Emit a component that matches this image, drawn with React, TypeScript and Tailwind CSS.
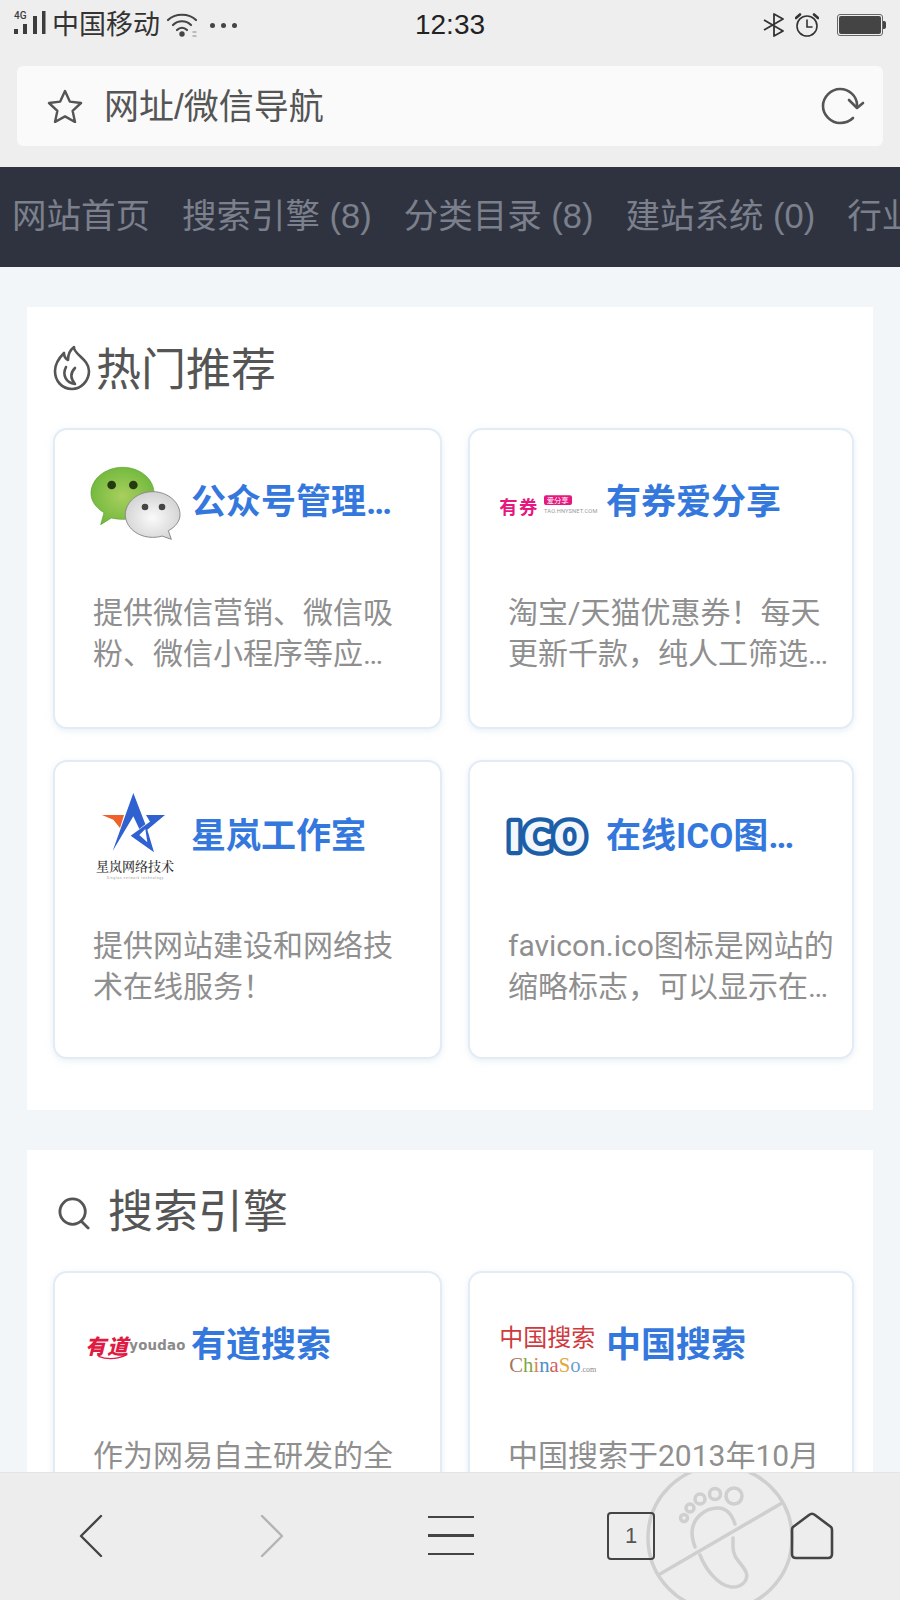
import { ReactNode } from 'react'

const cjk = "Noto Sans CJK SC"

function WechatLogo() {
  return (
    <svg viewBox="165 393 300 300" className="w-[100px] h-[100px] shrink-0">
      <defs>
        <radialGradient id="wxGreen" cx="50%" cy="50%" r="60%">
          <stop offset="0%" stopColor="#a9cf5e" />
          <stop offset="100%" stopColor="#6bb63a" />
        </radialGradient>
        <radialGradient id="wxWhite" cx="50%" cy="55%" r="60%">
          <stop offset="0%" stopColor="#fafafa" />
          <stop offset="100%" stopColor="#cfcfcf" />
        </radialGradient>
      </defs>
      <path d="M212 614 L222 578 C196 562 183 542 183 520 C183 477 226 442 278 442 C330 442 372 477 372 520 C372 563 330 598 278 598 C266 598 254 596 244 594 Z" fill="url(#wxGreen)" stroke="#5aa02c" strokeWidth="2" />
      <circle cx="245" cy="495" r="13" fill="#263a10" />
      <circle cx="310" cy="495" r="13" fill="#263a10" />
      <path d="M424 658 L415 632 C438 620 450 602 450 584 C450 547 414 515 368 515 C322 515 286 547 286 584 C286 621 322 652 368 652 C378 652 388 651 396 648 Z" fill="url(#wxWhite)" stroke="#8c8c8c" strokeWidth="3" />
      <circle cx="345" cy="561" r="10" fill="#444" />
      <circle cx="396" cy="561" r="10" fill="#444" />
    </svg>
  )
}

function YouquanLogo() {
  return (
    <svg viewBox="90 33 300 300" className="w-[100px] h-[100px] shrink-0">
      <text x="88" y="221" fontFamily={cjk} fontWeight="700" fontSize="55" fill="#e6177f" textLength="114">有券</text>
      <rect x="222" y="166" width="84" height="29" rx="6" fill="#e6177f" />
      <text x="230" y="189" fontFamily={cjk} fontSize="22" fill="#fff">爱分享</text>
      <text x="222" y="220" fontFamily="Roboto" fontSize="17" fill="#999" textLength="160">TAO.HNYSNET.COM</text>
    </svg>
  )
}

function StarLogo() {
  return (
    <svg viewBox="45 18 300 300" className="w-[100px] h-[100px] shrink-0">
      <path d="M190 42 L128 216 L190 112 L208 150 L226 136 Z" fill="#2f62d0" />
      <path d="M285 108 L228 108 L240 128 L182 170 L252 220 L232 152 Z" fill="#2f62d0" />
      <path d="M208 168 L226 150 L232 190 Z" fill="#fff" />
      <path d="M96 108 L162 108 L150 147 L130 122 Z" fill="#f0602a" />
      <text x="78" y="276" fontFamily="Noto Serif CJK SC, Noto Sans CJK SC" fontSize="39" fontWeight="500" fill="#333" textLength="234">星岚网络技术</text>
      <text x="110" y="299" fontFamily="Roboto" fontSize="10" fill="#999" textLength="170">Xinglan network technology</text>
    </svg>
  )
}

function IcoLogo() {
  return (
    <svg viewBox="30 -12 300 300" className="w-[100px] h-[100px] shrink-0">
      <text
        x="52"
        y="186"
        fontFamily="DejaVu Sans"
        fontWeight="700"
        fontSize="116"
        fill="#f3f7fb"
        stroke="#1d5ea8"
        strokeWidth="26"
        strokeLinejoin="round"
        paintOrder="stroke"
        textLength="236"
      >
        ICO
      </text>
    </svg>
  )
}

function YoudaoLogo() {
  return (
    <svg viewBox="165 375 300 300" className="w-[100px] h-[100px] shrink-0">
      <text x="166" y="556" fontFamily={cjk} fontWeight="900" fontStyle="italic" fontSize="62" fill="#e01b43" textLength="128">有道</text>
      <path d="M205 562 C232 572 264 570 292 556" fill="none" stroke="#e01b43" strokeWidth="4" />
      <text x="298" y="542" fontFamily="DejaVu Sans" fontWeight="700" fontSize="40" fill="#8a8a8a" textLength="168">youdao</text>
    </svg>
  )
}

function ChinasoLogo() {
  return (
    <svg viewBox="60 -15 300 300" className="w-[100px] h-[100px] shrink-0">
      <text x="58" y="142" fontFamily={cjk} fontSize="72" fill="#cf3a3e" textLength="288">中国搜索</text>
      <text y="218" fontFamily="Liberation Serif" fontSize="62">
        <tspan x="88" fill="#a8745a">C</tspan>
        <tspan fill="#7fa548">h</tspan>
        <tspan fill="#d9884a">i</tspan>
        <tspan fill="#4b8fc9">n</tspan>
        <tspan fill="#d25b5b">a</tspan>
        <tspan fill="#e0a93c">S</tspan>
        <tspan fill="#6f9fd0">o</tspan>
        <tspan fontSize="24" fill="#888">.com</tspan>
      </text>
    </svg>
  )
}

function SiteCard({ logo, title, desc, offset = false }: { logo: ReactNode; title: string; desc: string; offset?: boolean }) {
  return (
    <div className={offset ? 'h-[299px] border-2 border-[#e3ecf5] rounded-[14px] bg-white shadow-[0_2px_6px_rgba(210,225,240,0.5)] pl-[38px] flex flex-col overflow-hidden' : 'h-[301px] border-2 border-[#e3ecf5] rounded-[14px] bg-white shadow-[0_2px_6px_rgba(210,225,240,0.5)] pl-[38px] flex flex-col overflow-hidden'}>
      <div className={offset ? 'flex items-center shrink-0 h-[100px] mt-[23px] mb-[40px]' : 'flex items-center shrink-0 h-[100px] mt-[21px] mb-[41px]'}>
        <div className="w-[100px] mr-[6px] -ml-[8px] flex justify-center shrink-0">{logo}</div>
        <div className="w-[204px] pt-[4px] truncate text-[35px] font-bold leading-[48px] text-[#3478de] [font-family:Roboto,'Noto_Sans_CJK_SC',sans-serif]">{title}</div>
      </div>
      <p className="text-[30px] leading-[41px] text-[#8f8f8f] line-clamp-2 [font-family:Roboto,'Noto_Sans_CJK_SC',sans-serif]">{desc}</p>
    </div>
  )
}

function FlameIcon() {
  return (
    <svg viewBox="0 0 38 46" className="w-[38px] h-[46px] shrink-0" fill="none" stroke="#555" strokeWidth="2.6" strokeLinecap="round" strokeLinejoin="round">
      <path d="M21 2 C20 9 36 14 36 26 C36 36 28 44 19 44 C9 44 2 36 2 26 C2 18 7 12 11 8 C11 12 13 14 15 15 C15 9 17 5 21 2 Z" />
      <path d="M13 22 C9 30 13 38 22 39 C17 33 17 28 22 23" />
    </svg>
  )
}

function SearchIcon() {
  return (
    <svg viewBox="0 0 34 35" className="mt-[6px] w-[32px] h-[33px] shrink-0" fill="none" stroke="#555" strokeWidth="3" strokeLinecap="round">
      <circle cx="15.5" cy="15.5" r="13.5" />
      <path d="M25 26 L32 33" />
    </svg>
  )
}

function StatusLeft() {
  return (
    <div className="flex items-center">
      <svg viewBox="0 0 34 36" className="w-[34px] h-[36px] -mt-[12px]" fill="#3c3c3c">
        <text x="0" y="18" fontFamily="Roboto" fontSize="10" fontWeight="500">4G</text>
        <rect x="0" y="28" width="4" height="5" />
        <rect x="9" y="23" width="4" height="10" />
        <rect x="19" y="15" width="4" height="18" />
        <rect x="28" y="10" width="3.5" height="23" />
      </svg>
      <span className="ml-[4px] text-[27px] leading-none text-[#333]">中国移动</span>
      <svg viewBox="0 0 32 26" className="ml-[6px] w-[32px] h-[26px]" fill="none" stroke="#444" strokeWidth="2.2" strokeLinecap="round">
        <path d="M2 8 C9 1 23 1 30 8" />
        <path d="M7 13 C12 8 20 8 25 13" />
        <path d="M11 18 C14 15 18 15 21 18" />
        <circle cx="16" cy="22" r="1.6" fill="#444" />
        <path d="M27 20 L30 20 M27 24 L30 24" stroke="#aaa" strokeWidth="1.4" />
      </svg>
      <div className="ml-[12px] flex gap-[6px]">
        <span className="w-[5px] h-[5px] rounded-full bg-[#444]" />
        <span className="w-[5px] h-[5px] rounded-full bg-[#444]" />
        <span className="w-[5px] h-[5px] rounded-full bg-[#444]" />
      </div>
    </div>
  )
}

function StatusRight() {
  return (
    <div className="flex items-center justify-end">
      <svg viewBox="0 0 22 24" className="w-[22px] h-[24px]" fill="none" stroke="#333" strokeWidth="1.8" strokeLinejoin="round">
        <path d="M1 7 L20 18 L11 23 L11 1 L20 6 L1 17" />
      </svg>
      <svg viewBox="0 0 24 24" className="ml-[10px] w-[24px] h-[24px]" fill="none" stroke="#333" strokeWidth="1.6" strokeLinecap="round">
        <circle cx="12" cy="13" r="10" />
        <path d="M12 7 L12 14 L17 14" />
        <path d="M1 5 L5 1.5 M23 5 L19 1.5" strokeWidth="2.6" />
      </svg>
      <div className="ml-[18px] w-[46px] h-[22px] border border-[#666] rounded-[3px] p-[1px]">
        <div className="w-full h-full bg-[#444] rounded-[2px]" />
      </div>
      <div className="w-[3px] h-[8px] bg-[#444] rounded-r-[2px]" />
    </div>
  )
}

// no-tracking footprint stamped across the toolbar
function Watermark() {
  return (
    <svg viewBox="0 0 150 150" className="absolute left-[645px] top-[-10px] w-[150px] h-[150px]" fill="none" stroke="#cfcfcf" strokeWidth="3.5" strokeLinecap="round">
      <circle cx="75" cy="75" r="72" />
      <path d="M15 111 L137 40" />
      <circle cx="89" cy="33" r="8" />
      <circle cx="70" cy="31" r="5.5" />
      <circle cx="55" cy="36" r="5" />
      <circle cx="45" cy="45" r="4" />
      <circle cx="39" cy="55" r="3.5" />
      <path d="M90 61 C87 52 82 45 73 45 C60 45 47 55 47 70 C47 76 49 81 50 84" />
      <path d="M55 92 C60 105 72 122 86 124 C97 125 104 117 101 109 C97 100 88 96 88 84 L88 75" />
    </svg>
  )
}

function BottomBar() {
  return (
    <div className="relative shrink-0 h-[128px] bg-[#ededed] border-t border-[#e4e4e4] overflow-hidden flex items-center pb-[2px]">
      <Watermark />
      <div className="relative w-full grid grid-cols-[183px_182px_177px_248px_auto] items-center">
        <svg viewBox="0 0 24 44" className="ml-[79px] w-[24px] h-[44px]" fill="none" stroke="#444" strokeWidth="2.4" strokeLinecap="round" strokeLinejoin="round">
          <path d="M22 2 L2 22 L22 42" />
        </svg>
        <svg viewBox="0 0 24 44" className="ml-[77px] w-[24px] h-[44px]" fill="none" stroke="#b3b3b3" strokeWidth="2.4" strokeLinecap="round" strokeLinejoin="round">
          <path d="M2 2 L22 22 L2 42" />
        </svg>
        <div className="ml-[63px] w-[46px] flex flex-col gap-[16px]">
          <div className="h-[2.5px] bg-[#444]" />
          <div className="h-[2.5px] bg-[#444]" />
          <div className="h-[2.5px] bg-[#444]" />
        </div>
        <div className="ml-[65px] w-[48px] h-[48px] border-[2.5px] border-[#444] rounded-[4px] flex items-center justify-center text-[22px] text-[#555]">1</div>
        <svg viewBox="0 0 44 48" className="w-[44px] h-[48px]" fill="none" stroke="#444" strokeWidth="2.6" strokeLinejoin="round">
          <path d="M19 3 Q22 0.5 25 3 L41 15 Q42 16 42 18 L42 42 Q42 46 38 46 L6 46 Q2 46 2 42 L2 18 Q2 16 3 15 Z" />
        </svg>
      </div>
    </div>
  )
}

export default function App() {
  return (
    <div className="w-[900px] h-[1600px] flex flex-col overflow-hidden bg-[#f2f6f9] [font-family:'Liberation_Sans','Noto_Sans_CJK_SC',sans-serif]">
      {/* status bar + address bar */}
      <div className="shrink-0 h-[167px] bg-[#eeeeee]">
        <div className="h-[66px] grid grid-cols-[1fr_auto_1fr] items-center px-[14px] pb-[16px]">
          <StatusLeft />
          <span className="text-[28px] leading-none text-[#222]">12:33</span>
          <StatusRight />
        </div>
        <div className="mx-[17px] h-[80px] rounded-[6px] bg-[#fafafa] flex items-center pl-[30px] pr-[18px]">
          <svg viewBox="0 0 36 34" className="w-[36px] h-[34px] shrink-0" fill="none" stroke="#555" strokeWidth="2.4" strokeLinejoin="round">
            <path d="M18 2 L22.8 12.6 L34 14 L25.6 21.8 L28 33 L18 27.4 L8 33 L10.4 21.8 L2 14 L13.2 12.6 Z" />
          </svg>
          <span className="ml-[21px] flex-1 text-[35px] leading-none text-[#555]">网址/微信导航</span>
          <svg viewBox="0 0 44 38" className="w-[44px] h-[38px] shrink-0" fill="none" stroke="#555" strokeWidth="2.6" strokeLinecap="round" strokeLinejoin="round">
            <path d="M36 18 C36 9 28 2 19 2 C10 2 2 10 2 19 C2 28 10 36 19 36 C24 36 29 34 32 31" />
            <path d="M28 13 L36 21 L42 16" />
          </svg>
        </div>
      </div>

      {/* category nav */}
      <div className="shrink-0 h-[100px] bg-[#2f3340] flex items-center gap-[32px] pl-[12px] whitespace-nowrap overflow-hidden text-[34.5px] text-[#7b808c]">
        <span>网站首页</span>
        <span>搜索引擎 (8)</span>
        <span>分类目录 (8)</span>
        <span>建站系统 (0)</span>
        <span>行业网站 (8)</span>
      </div>

      <div className="flex-1 min-h-0 overflow-hidden pt-[40px] px-[27px] flex flex-col gap-[40px]">
        <section className="shrink-0 bg-white pl-[26px] pr-[19px] pb-[51px]">
          <div className="h-[121px] flex items-center">
            <FlameIcon />
            <h2 className="ml-[5px] pt-[6px] text-[45px] font-normal text-[#555]">热门推荐</h2>
          </div>
          {/* left column clamps a little earlier than the right one */}
          <div className="grid grid-cols-[389px_386px] gap-x-[26px] gap-y-[31px] [&>*:nth-child(odd)]:pr-[32px] [&>*:nth-child(even)]:pr-[17px]">
            <SiteCard logo={<WechatLogo />} title="公众号管理平台" desc="提供微信营销、微信吸粉、微信小程序等应用开发服务" />
            <SiteCard logo={<YouquanLogo />} title="有券爱分享" desc="淘宝/天猫优惠券！每天更新千款，纯人工筛选优质商品" />
            <SiteCard offset logo={<StarLogo />} title="星岚工作室" desc="提供网站建设和网络技术在线服务！" />
            <SiteCard offset logo={<IcoLogo />} title="在线ICO图标制作" desc="favicon.ico图标是网站的缩略标志，可以显示在浏览器标签" />
          </div>
        </section>

        <section className="shrink-0 bg-white pl-[26px] pr-[19px] pb-[51px]">
          <div className="h-[121px] flex items-center pl-[5px]">
            <SearchIcon />
            <h2 className="ml-[18px] pt-[4px] text-[45px] font-normal text-[#555]">搜索引擎</h2>
          </div>
          <div className="grid grid-cols-[389px_386px] gap-x-[26px] gap-y-[31px] [&>*:nth-child(odd)]:pr-[32px] [&>*:nth-child(even)]:pr-[17px]">
            <SiteCard logo={<YoudaoLogo />} title="有道搜索" desc="作为网易自主研发的全新中文搜索引擎" />
            <SiteCard logo={<ChinasoLogo />} title="中国搜索" desc="中国搜索于2013年10月由七大新闻单位联合创办" />
          </div>
        </section>
      </div>

      <BottomBar />
    </div>
  )
}
